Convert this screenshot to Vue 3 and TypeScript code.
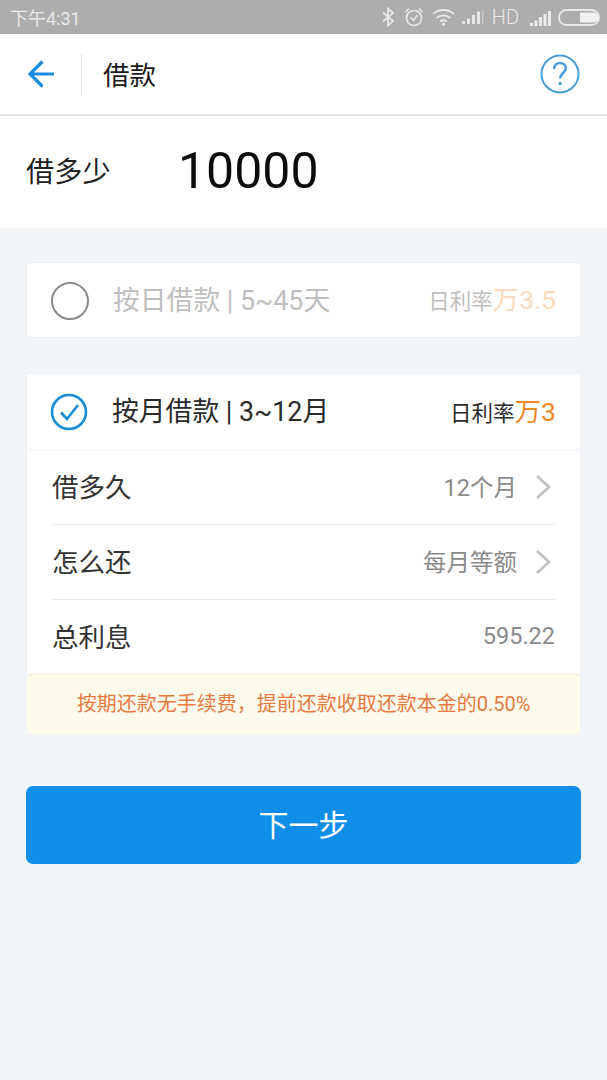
<template>
  <div class="page">
    <div class="status-bar">
      <span class="clock">下午4:31</span>
      <div class="status-icons">
        <svg width="12" height="20" viewBox="0 0 12 20" fill="none" stroke="#e8e8e8" stroke-width="1.8">
          <path d="M1 5.500 11 14 6 18.500V1.500L11 6 1 14.500" />
        </svg>
        <svg class="alarm" width="20" height="20" viewBox="0 0 20 20" fill="none" stroke="#e8e8e8" stroke-width="1.700">
          <circle cx="10" cy="11" r="7.500" />
          <path d="M6.500 10.500l3 2.800 4-5M1.500 5 5 1.500M18.500 5 15 1.500" />
        </svg>
        <svg width="23" height="18" viewBox="0 0 23 18" fill="none" stroke="#e8e8e8" stroke-width="2">
          <path d="M1 6c6-5.300 15-5.300 21 0M4.500 10c3.800-3.200 10.200-3.200 14 0M8 13.500c1.900-1.300 5.100-1.300 7 0" />
          <circle cx="11.500" cy="16.300" r="1.500" fill="#e8e8e8" stroke="none" />
        </svg>
        <svg width="22" height="14" viewBox="0 0 22 14" fill="#e6e6e6">
          <rect x="0" y="11" width="3" height="3" />
          <rect x="5" y="8.500" width="3" height="5.500" />
          <rect x="10" y="5" width="3" height="9" />
          <rect x="15" y="1.500" width="3" height="12.500" />
          <rect x="20" y="0" width="1.500" height="14" fill="#c8c8c8" />
        </svg>
        <span class="hd">HD</span>
        <svg class="signal" width="21" height="15" viewBox="0 0 21 15" fill="#ececec">
          <rect x="0" y="12" width="3" height="3" />
          <rect x="4.500" y="9.500" width="3" height="5.500" />
          <rect x="9" y="6" width="3" height="9" />
          <rect x="13.500" y="3" width="3" height="12" />
          <rect x="18" y="0" width="3" height="15" />
        </svg>
        <svg width="42" height="17" viewBox="0 0 42 17">
          <rect x="1" y="1" width="40" height="15" rx="7.500" fill="none" stroke="#e8e8e8" stroke-width="1.800" />
          <path d="M22 3.500h13.500a5 5 0 0 1 0 10H22z" fill="#f0f0f0" />
        </svg>
      </div>
    </div>

    <header class="top-bar">
      <button class="back" aria-label="返回">
        <svg width="28" height="28" viewBox="0 0 28 28" fill="none" stroke="#1a8ce0" stroke-width="3.200">
          <path d="M27 14H3M15.500 1.500 3 14l12.500 12.500" />
        </svg>
      </button>
      <h1 class="title">借款</h1>
      <svg class="help" width="40" height="40" viewBox="0 0 40 40" fill="none" stroke="#4a9fd6" stroke-width="2">
        <circle cx="20" cy="20" r="18.500" />
        <path d="M14 15c0-3.600 2.700-6 6-6 3.400 0 5.800 2.300 5.800 5.300 0 4.700-5.700 4.900-5.700 10.200" stroke-width="2.600" />
        <circle cx="20.100" cy="29.500" r="1.800" fill="#4a9fd6" stroke="none" />
      </svg>
    </header>

    <section class="amount">
      <span class="amount-label">借多少</span>
      <span class="amount-value">10000</span>
    </section>

    <main class="content">
      <div class="card plan">
        <span class="radio"></span>
        <span class="plan-name faded">按日借款 | 5~45天</span>
        <span class="rate faded">日利率<em>万3.5</em></span>
      </div>

      <div class="card">
        <div class="plan">
          <svg class="check" width="38" height="38" viewBox="0 0 38 38" fill="none" stroke="#1a8dd6" stroke-width="2.600">
            <circle cx="19" cy="19" r="17" />
            <path d="M11 19.500l6 6.500 11-14" />
          </svg>
          <span class="plan-name">按月借款 | 3~12月</span>
          <span class="rate">日利率<em>万3</em></span>
        </div>
        <div v-for="row in rows" :key="row.label" class="row">
          <span class="row-label">{{ row.label }}</span>
          <span class="row-value">{{ row.value }}</span>
          <svg v-if="row.arrow" class="chevron" width="17" height="26" viewBox="0 0 17 26" fill="none" stroke="#c2c2c2" stroke-width="2.800">
            <path d="M2 2l12 11L2 24" />
          </svg>
        </div>
        <p class="notice">按期还款无手续费，提前还款收取还款本金的0.50%</p>
      </div>

      <button class="next">下一步</button>
    </main>
  </div>
</template>

<script setup lang="ts">
const rows = [
  { label: '借多久', value: '12个月', arrow: true },
  { label: '怎么还', value: '每月等额', arrow: true },
  { label: '总利息', value: '595.22', arrow: false },
]
</script>

<style>
html,
body {
  margin: 0;
  background: #f2f5f8;
}
</style>

<style scoped>
.page {
  width: 607px;
  height: 1080px;
  overflow: hidden;
  background: #f2f5f8;
  font-family: Roboto, "Noto Sans CJK SC", sans-serif;
  color: #222;
}

.status-bar {
  height: 34px;
  box-sizing: border-box;
  padding: 0 7px 0 10px;
  display: flex;
  align-items: center;
  justify-content: space-between;
  background: #adadad;
  color: #e8e8e8;
}

.clock {
  font-size: 18px;
}

.status-icons {
  display: flex;
  align-items: center;
  gap: 7.500px;
}

.alarm {
  margin-left: 3px;
}

.signal {
  margin-left: 3px;
  margin-top: 3px;
}

.hd {
  font-size: 20px;
  font-weight: 300;
}

.top-bar {
  height: 82px;
  box-sizing: border-box;
  border-bottom: 2px solid #e4e4e4;
  background: #fff;
  display: flex;
  align-items: center;
  padding: 0 27px;
}

.back {
  width: 55px;
  height: 40px;
  padding: 0;
  border: 0;
  border-right: 1px solid #e2e2e2;
  background: none;
  display: flex;
  align-items: center;
}

.title {
  margin: 0 0 0 21px;
  padding-bottom: 1px;
  font-size: 26.500px;
  font-weight: 400;
  color: #1a1a1a;
}

.help {
  margin-left: auto;
}

.amount {
  height: 112px;
  box-sizing: border-box;
  background: #fff;
  padding-left: 26px;
  display: flex;
  align-items: center;
}

.amount-label {
  width: 152px;
  padding-bottom: 5px;
  font-size: 28.200px;
  color: #222;
}

.amount-value {
  padding-bottom: 2px;
  font-size: 50px;
  color: #0c0c0c;
}

.content {
  padding: 34px 26px 0;
  display: flex;
  flex-direction: column;
}

.card {
  box-sizing: border-box;
  background: #fff;
  border: 1px solid #eef1f5;
  border-radius: 3px;
  margin-bottom: 35px;
}

.plan {
  height: 76px;
  box-sizing: border-box;
  padding: 0 24px 0 24px;
  display: flex;
  align-items: center;
}

.card > .plan {
  height: 75px;
}

.radio {
  width: 34px;
  height: 34px;
  margin-top: 1px;
  border: 2px solid #8a8a8a;
  border-radius: 50%;
}

.check {
  margin-left: -1px;
}

.plan-name {
  margin-left: 24px;
  padding-bottom: 4px;
  font-size: 26.800px;
  color: #2a2a2a;
}

.rate {
  margin-left: auto;
  padding-bottom: 5px;
  font-size: 21.500px;
  color: #2a2a2a;
}

.rate em {
  font-style: normal;
  font-size: 26.500px;
  color: #ee8a26;
}

.faded {
  opacity: 0.3;
}

.row {
  height: 75px;
  box-sizing: border-box;
  margin: 0 25px;
  border-top: 1px solid #e8e8e8;
  display: flex;
  align-items: center;
}

.card > .plan + .row {
  margin: 0;
  padding: 0 25px;
  border-top-color: #f2f2f2;
}

.row-label {
  padding-bottom: 4px;
  font-size: 26.500px;
  color: #333;
}

.row-value {
  margin-left: auto;
  padding-bottom: 3px;
  font-size: 23.500px;
  color: #8a8a8a;
}

.chevron {
  margin-left: 18px;
  margin-right: 3px;
}

.notice {
  margin: 0;
  height: 60px;
  border-top: 1px solid #f3eee0;
  box-sizing: border-box;
  background: #fffbec;
  color: #e67a42;
  font-size: 20px;
  line-height: 59px;
  text-align: center;
}

.next {
  height: 78px;
  margin-top: 16px;
  padding-bottom: 5px;
  border: 0;
  border-radius: 7px;
  background: #0f8eea;
  color: #fff;
  font-family: inherit;
  font-size: 30px;
}
</style>
